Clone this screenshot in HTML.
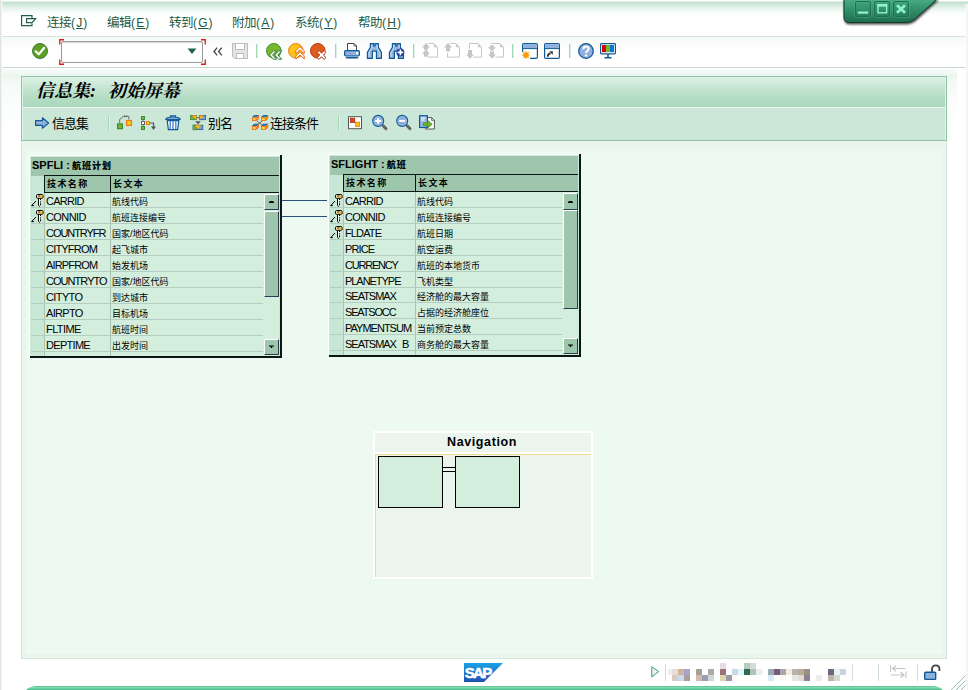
<!DOCTYPE html>
<html lang="zh">
<head>
<meta charset="utf-8">
<title>信息集: 初始屏幕</title>
<style>
*{box-sizing:border-box;margin:0;padding:0}
html,body{width:968px;height:690px;overflow:hidden;background:#fff}
body{font-family:"Liberation Sans","Noto Sans CJK SC",sans-serif;font-size:12px;color:#000;position:relative}
.abs{position:absolute}
svg{position:absolute;overflow:visible}
#topgrad{left:0;top:0;width:968px;height:36px;background:linear-gradient(#fff 0,#fff 1px,#c2e1ce 2px,#c8e4d3 3px,#dff0e6 7px,#f3faf6 11px,#fff 15px)}
#menuline{left:0;top:36px;width:968px;height:1px;background:#d5e4da}
#toolbarbg{left:0;top:37px;width:968px;height:30px;background:linear-gradient(#f7fbf8,#fff 50%)}
#toolline{left:0;top:67px;width:968px;height:1px;background:#c6dace}
#midbg{left:0;top:68px;width:957px;height:591px;background:linear-gradient(#fff 0,#f3faf6 3px,#eaf5ee 8px,#f4faf6 14px,#fcfefd 40px,#fff 80px)}
#leftedge{left:0;top:0;width:3px;height:690px;background:linear-gradient(90deg,#d6dad8,#f3f5f4 1.5px,rgba(255,255,255,0))}
#rightedge{left:965px;top:4px;width:3px;height:686px;background:linear-gradient(270deg,#f0f0f0,#fafafa 2px,rgba(255,255,255,0))}
.menu{top:15px;height:16px;line-height:16px;font-size:12.5px;letter-spacing:-0.5px;color:#1b5a42;white-space:nowrap}
.menu u{text-decoration:underline}
.menu .lat{letter-spacing:1.1px;font-size:12px}
#panel{left:21px;top:76px;width:926px;height:583px;background:#ecf8f0;border:1px solid #d3e6da}
#canvas{left:0;top:64px;width:924px;height:517px;background:#edfaf2;border-style:solid;border-color:#eaf5ee;border-width:8px 4px 4px 4px}
#phead{left:-1px;top:-1px;width:926px;height:65px;border:1px solid #8fc2a6;background:#cbe7d7}
#ptitle{left:0;top:0;width:924px;height:30px;background:linear-gradient(#d9f0e1,#c6e5d2 35%,#b2dcc3 70%,#abd8bd);border:1px solid #e0f3e8;border-bottom:none}
#ptitle span.t{position:absolute;left:13px;top:1px;font-size:18px;font-weight:bold;font-style:italic;line-height:24px;white-space:nowrap;font-family:"Liberation Serif","Noto Serif CJK SC",serif}
#ptitle span.t i{display:inline-block;width:9px;font-style:inherit}
#psep{left:0;top:30px;width:924px;height:1px;background:#eaf7ef}
#ptool{left:0;top:31px;width:924px;height:32px;border-left:1px solid #dff3e7;border-right:1px solid #dff3e7}
.tlabel{top:116px;height:16px;line-height:16px;font-size:13px;letter-spacing:-1px;white-space:nowrap;color:#000}
.vsep{width:2px;height:14px;background:linear-gradient(90deg,#a6d3b8 50%,#e4f4ea 50%)}
.tsep{width:2px;height:14px;background:linear-gradient(90deg,#a3d6b8 50%,#d9f0e3 50%)}
#status{left:0;top:659px;width:968px;height:27px;background:#fff}
.ssep{top:664px;width:1px;height:17px;background:#d3ded7}
#bottomstrip{left:26px;top:686px;width:917px;height:12px;border-radius:12px 12px 0 0 / 5px 5px 0 0;background:linear-gradient(#4cb888,#7ad8ab 1px,#80dcb1 2px,#5cc495 3px,#4fb98a 4px)}
/* tables */
.tb{background:#d3eedd}
.tb .ttl{position:absolute;left:0;top:0;right:0;background:#9dc6ac}
.tb .ttl span{position:absolute;left:1px;top:2px;font-size:11px;line-height:13px;font-weight:bold;white-space:nowrap;letter-spacing:0}
.tb .ttl span b{font-size:9px;letter-spacing:1px;margin-left:-1px}
.cell{position:absolute;font-size:11px;line-height:14px;white-space:nowrap;letter-spacing:-0.8px;color:#000}
.cj{position:absolute;font-size:9px;font-weight:400;line-height:14px;white-space:nowrap;font-family:"Liberation Sans","Noto Sans CJK SC",sans-serif;color:#000}
.hd{position:absolute;font-size:9px;line-height:14px;font-weight:bold;letter-spacing:1.4px;white-space:nowrap;font-family:"Liberation Sans","Noto Sans CJK SC",sans-serif}
.hl{position:absolute;height:1px;background:#b4cdbe}
.vl{position:absolute;width:1px;background:#a9c4b4}
.bk{position:absolute;background:#0c1612}
</style>
</head>
<body>
<div class="abs" id="topgrad"></div>
<div class="abs" id="menuline"></div>
<div class="abs" id="toolbarbg"></div>
<div class="abs" id="toolline"></div>
<div class="abs" id="midbg"></div>
<svg style="left:21px;top:15px" width="16" height="12" viewBox="0 0 16 12"><path d="M11 3V0.6H0.6V10.6H11V8.4M5.6 3.6H14.6L11 7.6H5.6Z" fill="none" stroke="#1d6044" stroke-width="1.2"/></svg>
<div class="abs menu" style="left:47px">连接<span class="lat">(<u>J</u>)</span></div>
<div class="abs menu" style="left:107px">编辑<span class="lat">(<u>E</u>)</span></div>
<div class="abs menu" style="left:169px">转到<span class="lat">(<u>G</u>)</span></div>
<div class="abs menu" style="left:232px">附加<span class="lat">(<u>A</u>)</span></div>
<div class="abs menu" style="left:295px">系统<span class="lat">(<u>Y</u>)</span></div>
<div class="abs menu" style="left:358px">帮助<span class="lat">(<u>H</u>)</span></div>
<svg style="left:32px;top:43px" width="16" height="16" viewBox="0 0 16 16"><circle cx="8" cy="8" r="7.5" fill="#5d9f24" stroke="#3f7d35" stroke-width="1"/><path d="M3.6 8.3 L6.8 11.2 L12.2 4.8" fill="none" stroke="#fff" stroke-width="2.2" stroke-linecap="round" stroke-linejoin="round"/></svg>
<div class="abs" style="left:61px;top:41px;width:142px;height:22px;background:#fff;border:1px solid #9a9a9a;border-radius:2px;box-shadow:inset 0 1px 1px #d8d8d8"></div>
<svg style="left:59px;top:39px" width="147" height="26" viewBox="0 0 147 26"><path d="M5 0.75H0.75V5.5M0.75 20.5V25.25H5M142 0.75H146.25V5.5M146.25 20.5V25.25H142" fill="none" stroke="#e8141c" stroke-width="1.3"/><path d="M128.5 9.5H137.5L133 15Z" fill="#1f6446"/></svg>
<svg style="left:213px;top:47px" width="10" height="9" viewBox="0 0 10 9"><path d="M4.2 0.6L1 4.5L4.2 8.4M8.8 0.6L5.6 4.5L8.8 8.4" fill="none" stroke="#4a4a4a" stroke-width="1.4"/></svg>
<svg style="left:232px;top:43px" width="16" height="16" viewBox="0 0 16 16"><path d="M0.5 0.5H15.5V15.5H2.5L0.5 13.5Z" fill="#e4e4e4" stroke="#bdbdbd"/><rect x="3.5" y="0.5" width="9" height="6" fill="#fff" stroke="#bdbdbd"/><rect x="4.5" y="10.5" width="7" height="5" fill="#fff" stroke="#bdbdbd"/></svg>
<div class="abs tsep" style="left:256px;top:44px"></div>
<div class="abs tsep" style="left:335px;top:44px"></div>
<div class="abs tsep" style="left:413px;top:44px"></div>
<div class="abs tsep" style="left:512px;top:44px"></div>
<div class="abs tsep" style="left:569px;top:44px"></div>
<svg style="left:266px;top:43px" width="16" height="16" viewBox="0 0 16 16"><circle cx="7.8" cy="7.8" r="7.3" fill="#76b82a" stroke="#3f8a3c" stroke-width="1"/><path d="M3.4 12 L7.6 7.8 H10.6 L6.6 12 L10.6 16.2 H7.6Z M8.6 12 L12.8 7.8 H15.8 L11.8 12 L15.8 16.2 H12.8Z" fill="#fff" stroke="#2f7a3a" stroke-width="1" stroke-linejoin="miter"/></svg>
<svg style="left:288px;top:43px" width="16" height="16" viewBox="0 0 16 16"><circle cx="7.8" cy="7.8" r="7.3" fill="#fdc51a" stroke="#ee7d1a" stroke-width="1"/><path d="M12 3.6 L16.2 7.800000000000001 V10.8 L12 6.800000000000001 L7.8 10.8 V7.800000000000001Z M12 8.8 L16.2 13.0 V16.0 L12 12.0 L7.8 16.0 V13.0Z" fill="#fff" stroke="#e8670f" stroke-width="1" stroke-linejoin="miter"/></svg>
<svg style="left:310px;top:43px" width="16" height="16" viewBox="0 0 16 16"><circle cx="7.8" cy="7.8" r="7.3" fill="#de5b1c" stroke="#b93a12" stroke-width="1"/><path d="M7.2 9.4 L9 7.6 L11.6 10.2 L14.2 7.6 L16 9.4 L13.4 12 L16 14.6 L14.2 16.4 L11.6 13.8 L9 16.4 L7.2 14.6 L9.8 12Z" fill="#fff" stroke="#b93a12" stroke-width="1" stroke-linejoin="miter"/></svg>
<svg style="left:344px;top:43px" width="16" height="16" viewBox="0 0 16 16"><path d="M3.5 7V0.5H10L12.5 3V7" fill="#fff" stroke="#444" stroke-width="1"/><path d="M10 0.5V3H12.5" fill="none" stroke="#444" stroke-width="0.8"/><rect x="0.6" y="7.6" width="14.8" height="5.4" rx="1.2" fill="#8fb0dc" stroke="#0f5a96" stroke-width="1.2"/><rect x="12" y="9" width="2.2" height="2.4" fill="#fff"/><path d="M2.5 14.8 H13.5" stroke="#0f5a96" stroke-width="1.6" stroke-linecap="round"/></svg>
<svg style="left:366px;top:43px" width="16" height="16" viewBox="0 0 16 16"><path d="M4.4 0.6H7.7V3H9.1V0.6H12.4V4.4L15.4 9.4V15.4H10.4V8.2H6.4V15.4H1.4V9.4L4.4 4.4Z" fill="#94b4dc" stroke="#0f5a96" stroke-width="1.2" stroke-linejoin="round"/><path d="M5.6 2V5L3 9.6V14M11.2 2V5L13.8 9.6V14" stroke="#c9dcf0" stroke-width="1" fill="none"/></svg>
<svg style="left:388px;top:43px" width="16" height="16" viewBox="0 0 16 16"><path d="M4.4 0.6H7.7V3H9.1V0.6H12.4V4.4L15.4 9.4V15.4H10.4V8.2H6.4V15.4H1.4V9.4L4.4 4.4Z" fill="#94b4dc" stroke="#0f5a96" stroke-width="1.2" stroke-linejoin="round"/><path d="M5.6 2V5L3 9.6V14M11.2 2V5L13.8 9.6V14" stroke="#c9dcf0" stroke-width="1" fill="none"/><circle cx="12.4" cy="9.4" r="4" fill="#1d3e9a"/><path d="M12.4 6.6V12.2M9.6 9.4H15.2" stroke="#fff" stroke-width="1.7"/></svg>
<svg style="left:422px;top:43px" width="16" height="16" viewBox="0 0 16 16"><path d="M6.4 0.5H11.9L15.5 4.2V14.1H6.2" fill="#fff" stroke="#c6c6c6" stroke-width="1"/><path d="M11.9 0.5V4.2H15.5Z" fill="#c6c6c6"/><path d="M4 0L8 4.4H6V6.8H2V4.4H0Z" fill="#c6c6c6"/><path d="M4 6.6L8 11.0H6V13.8H2V11.0H0Z" fill="#c6c6c6"/></svg>
<svg style="left:444px;top:43px" width="16" height="16" viewBox="0 0 16 16"><path d="M6.4 0.5H11.9L15.5 4.2V14.1H3.5V10" fill="#fff" stroke="#c6c6c6" stroke-width="1"/><path d="M11.9 0.5V4.2H15.5Z" fill="#c6c6c6"/><path d="M4 0L8 4.4H6V8.6H2V4.4H0Z" fill="#c6c6c6"/></svg>
<svg style="left:466px;top:43px" width="16" height="16" viewBox="0 0 16 16"><path d="M3.5 5.8V0.5H11.9L15.5 4.2V14.1H7.4" fill="#fff" stroke="#c6c6c6" stroke-width="1"/><path d="M11.9 0.5V4.2H15.5Z" fill="#c6c6c6"/><path d="M4 15.8L8 11.4H6V7.1H2V11.4H0Z" fill="#c6c6c6"/></svg>
<svg style="left:488px;top:43px" width="16" height="16" viewBox="0 0 16 16"><path d="M3.4 0.5H11.9L15.5 4.2V14.1H7.4" fill="#fff" stroke="#c6c6c6" stroke-width="1"/><path d="M11.9 0.5V4.2H15.5Z" fill="#c6c6c6"/><path d="M4 8.6L8 4.199999999999999H6V2.2H2V4.199999999999999H0Z" fill="#c6c6c6"/><path d="M4 15.8L8 11.4H6V8.4H2V11.4H0Z" fill="#c6c6c6"/></svg>
<svg style="left:522px;top:43px" width="16" height="16" viewBox="0 0 16 16"><path d="M0.6 9V1.8Q0.6 0.6 1.8 0.6H14.2Q15.4 0.6 15.4 1.8V14.2Q15.4 15.4 14.2 15.4H8" fill="#fff" stroke="#0f5a96" stroke-width="1.2"/><rect x="1.2" y="1.2" width="13.6" height="4" fill="#8fb0dc"/><path d="M0.6 5.6H15.4" stroke="#0f5a96" stroke-width="1"/><circle cx="4" cy="12" r="2.6" fill="#fb9a0a"/><path d="M4 8V16M0 12H8M1.2 9.2L6.8 14.8M6.8 9.2L1.2 14.8" stroke="#fb9a0a" stroke-width="1.2"/></svg>
<svg style="left:544px;top:43px" width="16" height="16" viewBox="0 0 16 16"><rect x="0.6" y="0.6" width="14.8" height="14.8" rx="1.2" fill="#fff" stroke="#0f5a96" stroke-width="1.2"/><rect x="1.2" y="1.2" width="13.6" height="4" fill="#8fb0dc"/><path d="M0.6 5.6H15.4" stroke="#0f5a96" stroke-width="1"/><path d="M3.8 13.8 Q3.6 10.6 6.6 10.4" fill="none" stroke="#333" stroke-width="1.7"/><path d="M5.2 8.2H8.8V11.8Z" fill="#333"/></svg>
<svg style="left:578px;top:43px" width="16" height="16" viewBox="0 0 16 16"><circle cx="8" cy="8" r="7.3" fill="#8fb0dc" stroke="#0f5a96" stroke-width="1.3"/><path d="M5.4 6.2 Q5.4 3.6 8 3.6 Q10.6 3.6 10.6 5.8 Q10.6 7.2 9.2 8 Q8 8.7 8 10" fill="none" stroke="#fff" stroke-width="2"/><circle cx="8" cy="12.4" r="1.2" fill="#fff"/></svg>
<svg style="left:600px;top:43px" width="16" height="16" viewBox="0 0 16 16"><rect x="0.6" y="0.6" width="14.8" height="10.2" rx="0.8" fill="#fff" stroke="#0f5a96" stroke-width="1.2"/><rect x="2" y="2" width="4" height="7.2" fill="#d9000d"/><rect x="6" y="2" width="4" height="7.2" fill="#76b82a"/><rect x="10" y="2" width="4" height="7.2" fill="#0a78d2"/><path d="M8 11V14M4.5 14.8H11.5" stroke="#0f5a96" stroke-width="1.6"/></svg>
<div class="abs" id="panel">
  <div class="abs" id="canvas"></div>
  <div class="abs" id="phead">
    <div class="abs" id="ptitle"><span class="t">信息集<i>:</i><i> </i>初始屏幕</span></div>
    <div class="abs" id="psep"></div>
    <div class="abs" id="ptool"></div>
  </div>
</div>
<svg style="left:35px;top:117px" width="14" height="12" viewBox="0 0 14 12"><path d="M0.6 3.6H7.4V0.8L13.6 6L7.4 11.2V8.4H0.6Z" fill="#8fb0dc" stroke="#0f5a96" stroke-width="1.2" stroke-linejoin="round"/></svg>
<div class="abs tlabel" style="left:52px">信息集</div>
<div class="abs vsep" style="left:108px;top:116px"></div>
<svg style="left:117px;top:115px" width="16" height="15" viewBox="0 0 16 15"><path d="M2.7 8V4.4L6.4 1.4H11.8V4.6" fill="none" stroke="#6a6a6a" stroke-width="1"/><path d="M7.4 0V2.4M9.6 0V1.4" stroke="#6a6a6a" stroke-width="0.8"/><rect x="0.6" y="8.9" width="4.8" height="4.8" fill="#7ab62c" stroke="#3f8a3c" stroke-width="1.2"/><rect x="9.6" y="5.6" width="4.8" height="4.8" fill="#fdd01a" stroke="#ee7d1a" stroke-width="1.3"/></svg>
<svg style="left:141px;top:116px" width="16" height="15" viewBox="0 0 16 15"><path d="M2 3V12" stroke="#666" stroke-width="0.8"/><rect x="0.5" y="0.5" width="3" height="3" fill="#7ab62c" stroke="#3f8a3c"/><rect x="0.5" y="5.5" width="3" height="3" fill="#fff" stroke="#666"/><rect x="0.5" y="10.5" width="3" height="3" fill="#7ab62c" stroke="#3f8a3c"/><rect x="5.5" y="5.5" width="3" height="3" fill="#fdd01a" stroke="#ee7d1a"/><path d="M9 7H12.5V11" fill="none" stroke="#555" stroke-width="1.2"/><path d="M10 10.6H15L12.5 14Z" fill="#555"/></svg>
<svg style="left:165px;top:115px" width="16" height="15" viewBox="0 0 16 15"><path d="M5.5 2V0.8H10.5V2" fill="none" stroke="#0f5a96" stroke-width="1.2"/><path d="M0.8 4.4 Q0.8 2 8 2 Q15.2 2 15.2 4.4 Z" fill="#a9c4e6" stroke="#0f5a96" stroke-width="1.2"/><path d="M2.2 5.6H13.8L12.6 14.6H3.4Z" fill="#fff" stroke="#0f5a96" stroke-width="1.2" stroke-linejoin="round"/><path d="M5.2 6V14M8 6V14M10.8 6V14" stroke="#4f8bd0" stroke-width="1.4"/></svg>
<svg style="left:190px;top:115px" width="16" height="15" viewBox="0 0 16 15"><rect x="0.5" y="0.5" width="6" height="4.2" fill="#6fae3a" stroke="#3f8a3c" stroke-width="0.8"/><path d="M2 0.7H6.4V4.5Z" fill="#fdc51a" stroke="#ee7d1a" stroke-width="0.6"/><rect x="9.5" y="0.5" width="6" height="4.2" fill="#7aa6dc" stroke="#0f5a96" stroke-width="0.8"/><path d="M9.6 0.7H14L9.6 4.5Z" fill="#fdc51a" stroke="#ee7d1a" stroke-width="0.6"/><path d="M6.5 2.6H9.5" stroke="#555" stroke-width="0.9"/><path d="M5.2 6.2H10.8L8 9.2Z" fill="#555"/><rect x="3.2" y="10.2" width="9.6" height="4.4" fill="#7aa6dc" stroke="#0f5a96" stroke-width="0.8"/><path d="M3 10H6.4V14.8H3Z" fill="#6fae3a" stroke="#3f8a3c" stroke-width="0.6"/><path d="M5 10.3H11L8 14.3Z" fill="#fdc51a" stroke="#ee7d1a" stroke-width="0.6"/></svg>
<div class="abs tlabel" style="left:208px">别名</div>
<svg style="left:251px;top:115px" width="17" height="15" viewBox="0 0 17 15"><path d="M5.6 5.8L11.8 10.4M11.4 6L5.8 10.2" stroke="#555" stroke-width="0.8"/><g transform="translate(0.9,0)"><path d="M0 2.3L2.4 0H7.2L4.8 2.3Z" fill="#0f5a96"/><path d="M2.2 1.2H5" stroke="#8fb0dc" stroke-width="0.6"/><path d="M4.8 2.3L7.2 0V3.7L4.8 6Z" fill="#f26a1b"/><path d="M5.5 3.3L6.5 2.3V3.3L5.5 4.3Z" fill="#ffd21a"/><rect x="0" y="2.3" width="4.8" height="3.7" fill="#f26a1b"/><rect x="1" y="3.2" width="2.8" height="1.9" fill="#ffe03a"/></g><g transform="translate(10,0)"><path d="M0 2.3L2.4 0H7.2L4.8 2.3Z" fill="#0f5a96"/><path d="M2.2 1.2H5" stroke="#8fb0dc" stroke-width="0.6"/><path d="M4.8 2.3L7.2 0V3.7L4.8 6Z" fill="#f26a1b"/><path d="M5.5 3.3L6.5 2.3V3.3L5.5 4.3Z" fill="#ffd21a"/><rect x="0" y="2.3" width="4.8" height="3.7" fill="#f26a1b"/><rect x="1" y="3.2" width="2.8" height="1.9" fill="#ffe03a"/></g><g transform="translate(0.9,8.8)"><path d="M0 2.3L2.4 0H7.2L4.8 2.3Z" fill="#0f5a96"/><path d="M2.2 1.2H5" stroke="#8fb0dc" stroke-width="0.6"/><path d="M4.8 2.3L7.2 0V3.7L4.8 6Z" fill="#f26a1b"/><path d="M5.5 3.3L6.5 2.3V3.3L5.5 4.3Z" fill="#ffd21a"/><rect x="0" y="2.3" width="4.8" height="3.7" fill="#f26a1b"/><rect x="1" y="3.2" width="2.8" height="1.9" fill="#ffe03a"/></g><g transform="translate(10,8.8)"><path d="M0 2.3L2.4 0H7.2L4.8 2.3Z" fill="#0f5a96"/><path d="M2.2 1.2H5" stroke="#8fb0dc" stroke-width="0.6"/><path d="M4.8 2.3L7.2 0V3.7L4.8 6Z" fill="#f26a1b"/><path d="M5.5 3.3L6.5 2.3V3.3L5.5 4.3Z" fill="#ffd21a"/><rect x="0" y="2.3" width="4.8" height="3.7" fill="#f26a1b"/><rect x="1" y="3.2" width="2.8" height="1.9" fill="#ffe03a"/></g></svg>
<div class="abs tlabel" style="left:270px">连接条件</div>
<div class="abs vsep" style="left:338px;top:116px"></div>
<svg style="left:348px;top:116px" width="14" height="13" viewBox="0 0 14 13"><rect x="0.5" y="0.7" width="13" height="12" fill="#fff" stroke="#555" stroke-width="1"/><rect x="2.5" y="2.2" width="4.2" height="4.2" fill="#e2481f" stroke="#a32a10" stroke-width="0.8"/><rect x="7.4" y="6.2" width="4.2" height="4.2" fill="#fdc51a" stroke="#ee7d1a" stroke-width="0.9"/></svg>
<svg style="left:372px;top:115px" width="16" height="16" viewBox="0 0 16 16"><path d="M11.2 10.9L14 13.6" stroke="#666" stroke-width="3" stroke-linecap="round"/><circle cx="6.2" cy="5.9" r="5.5" fill="#9dbbe0" stroke="#0f5a96" stroke-width="1.1"/><circle cx="6.2" cy="5.9" r="4.2" fill="#8aaedc"/><path d="M6.2 2.9V8.9M3.2 5.9H9.2" stroke="#fff" stroke-width="2"/></svg>
<svg style="left:396px;top:115px" width="16" height="16" viewBox="0 0 16 16"><path d="M11.2 10.9L14 13.6" stroke="#666" stroke-width="3" stroke-linecap="round"/><circle cx="6.2" cy="5.9" r="5.5" fill="#9dbbe0" stroke="#0f5a96" stroke-width="1.1"/><circle cx="6.2" cy="5.9" r="4.2" fill="#8aaedc"/><path d="M3.2 5.9H9.2" stroke="#fff" stroke-width="2"/></svg>
<svg style="left:419px;top:115px" width="16" height="16" viewBox="0 0 16 16"><path d="M8 2.6H12.6L15.4 5.4V14H6.6V12" fill="#fff" stroke="#555" stroke-width="1"/><path d="M12.6 2.6V5.4H15.4" fill="none" stroke="#555" stroke-width="0.8"/><rect x="0.6" y="0.7" width="7.8" height="11.8" fill="#9dbbe0" stroke="#0f5a96" stroke-width="1.2"/><path d="M2 3H6.4M2 5H5.4" stroke="#fff" stroke-width="1"/><path d="M4.2 7.8H8.8V5.6L13.2 9.2L8.8 12.8V10.6H4.2Z" fill="#6fb52c" stroke="#3f8a2a" stroke-width="0.8" stroke-linejoin="round"/></svg>
<div class="abs" style="left:29px;top:155px;width:253px;height:203px">
<div class="abs" style="left:0;top:0;width:251px;height:201px;background:#fff"></div>
<div class="abs" style="left:1px;top:1px;width:250px;height:200px;background:#cbe9d8"></div>
<div class="bk" style="left:251px;top:0;width:2px;height:203px"></div>
<div class="bk" style="left:1px;top:201px;width:252px;height:2px"></div>
<div class="abs tb" style="left:2px;top:2px;width:248px;height:199px;overflow:hidden">
<div class="ttl" style="height:36px"><span>SPFLI : <b>航班计划</b></span></div>
<div class="abs" style="left:0;top:19px;width:13px;height:203px;background:#c9e7d5"></div>
<div class="bk" style="left:13px;top:18px;width:248px;height:1px"></div>
<div class="bk" style="left:13px;top:35px;width:248px;height:1px"></div>
<div class="bk" style="left:13px;top:18px;width:1px;height:17px"></div>
<div class="bk" style="left:79px;top:18px;width:1px;height:17px"></div>
<div class="hd" style="left:16px;top:20px">技术名称</div>
<div class="hd" style="left:82px;top:20px">长文本</div>
<div class="vl" style="left:13px;top:36px;height:203px"></div>
<div class="vl" style="left:79px;top:36px;height:203px"></div>
<div class="hl" style="left:0;top:50px;width:232px"></div>
<div class="hl" style="left:0;top:66px;width:232px"></div>
<div class="hl" style="left:0;top:82px;width:232px"></div>
<div class="hl" style="left:0;top:98px;width:232px"></div>
<div class="hl" style="left:0;top:114px;width:232px"></div>
<div class="hl" style="left:0;top:130px;width:232px"></div>
<div class="hl" style="left:0;top:146px;width:232px"></div>
<div class="hl" style="left:0;top:162px;width:232px"></div>
<div class="hl" style="left:0;top:178px;width:232px"></div>
<div class="hl" style="left:0;top:194px;width:232px"></div>
<svg style="left:0px;top:35px" width="13" height="15" viewBox="0 0 13 15"><rect x="5.5" y="2.5" width="6.6" height="3.8" rx="1.2" fill="#ffeeb8" stroke="#000" stroke-width="1"/><rect x="8.8" y="3.4" width="2.6" height="2.4" fill="#f7a21b"/><path d="M7 4H9" stroke="#000" stroke-width="0.9"/><path d="M7.5 6.5V13.4L8.8 14.6" stroke="#000" stroke-width="1" fill="none"/><path d="M8.5 7V13" stroke="#fff" stroke-width="1"/><path d="M9.5 6.8V8 M9.5 9.4V10.4 M9.5 11.4V13.2" stroke="#000" stroke-width="1"/><path d="M4.9 9.1L0.6 13.6H2.9" stroke="#000" stroke-width="1" fill="none"/></svg>
<div class="cell" style="left:15px;top:37px"><span style="letter-spacing:-0.76px">CARRID</span></div>
<div class="cj" style="left:81px;top:38px">航线代码</div>
<svg style="left:0px;top:51px" width="13" height="15" viewBox="0 0 13 15"><rect x="5.5" y="2.5" width="6.6" height="3.8" rx="1.2" fill="#ffeeb8" stroke="#000" stroke-width="1"/><rect x="8.8" y="3.4" width="2.6" height="2.4" fill="#f7a21b"/><path d="M7 4H9" stroke="#000" stroke-width="0.9"/><path d="M7.5 6.5V13.4L8.8 14.6" stroke="#000" stroke-width="1" fill="none"/><path d="M8.5 7V13" stroke="#fff" stroke-width="1"/><path d="M9.5 6.8V8 M9.5 9.4V10.4 M9.5 11.4V13.2" stroke="#000" stroke-width="1"/><path d="M4.9 9.1L0.6 13.6H2.9" stroke="#000" stroke-width="1" fill="none"/></svg>
<div class="cell" style="left:15px;top:53px"><span style="letter-spacing:-0.6px">CONNID</span></div>
<div class="cj" style="left:81px;top:54px">航班连接编号</div>
<div class="cell" style="left:15px;top:69px"><span style="letter-spacing:-1.05px">COUNTRYFR</span></div>
<div class="cj" style="left:81px;top:70px">国家/地区代码</div>
<div class="cell" style="left:15px;top:85px"><span style="letter-spacing:-0.8px">CITYFROM</span></div>
<div class="cj" style="left:81px;top:86px">起飞城市</div>
<div class="cell" style="left:15px;top:101px"><span style="letter-spacing:-0.84px">AIRPFROM</span></div>
<div class="cj" style="left:81px;top:102px">始发机场</div>
<div class="cell" style="left:15px;top:117px"><span style="letter-spacing:-0.95px">COUNTRYTO</span></div>
<div class="cj" style="left:81px;top:118px">国家/地区代码</div>
<div class="cell" style="left:15px;top:133px"><span style="letter-spacing:-0.61px">CITYTO</span></div>
<div class="cj" style="left:81px;top:134px">到达城市</div>
<div class="cell" style="left:15px;top:149px"><span style="letter-spacing:-0.67px">AIRPTO</span></div>
<div class="cj" style="left:81px;top:150px">目标机场</div>
<div class="cell" style="left:15px;top:165px"><span style="letter-spacing:-0.59px">FLTIME</span></div>
<div class="cj" style="left:81px;top:166px">航班时间</div>
<div class="cell" style="left:15px;top:181px"><span style="letter-spacing:-0.7px">DEPTIME</span></div>
<div class="cj" style="left:81px;top:182px">出发时间</div>
<div class="abs" style="left:233px;top:37px;width:15px;height:16px;background:#9dc6ac;border-left:1px solid #fff;border-top:1px solid #fff;border-right:1px solid #2a3c50;border-bottom:1px solid #2a3c50"></div>
<svg style="left:237px;top:43px" width="7" height="4" viewBox="0 0 7 4"><path d="M1 3H6V2L4.8 1H2.2L1 2Z" fill="#000"/></svg>
<div class="abs" style="left:233px;top:54px;width:15px;height:86px;background:#9dc6ac;border-left:1px solid #fff;border-top:1px solid #fff;border-right:1px solid #2a3c50;border-bottom:1px solid #2a3c50"></div>
<div class="abs" style="left:233px;top:182px;width:15px;height:16px;background:#9dc6ac;border-left:1px solid #fff;border-top:1px solid #fff;border-right:1px solid #2a3c50;border-bottom:1px solid #2a3c50"></div>
<svg style="left:237px;top:188px" width="7" height="4" viewBox="0 0 7 4"><path d="M1 0.5H6V1.6H4.2V3H2.8V1.6H1Z" fill="#000"/></svg>
</div></div>
<div class="abs" style="left:328px;top:154px;width:253px;height:203px">
<div class="abs" style="left:0;top:0;width:251px;height:201px;background:#fff"></div>
<div class="abs" style="left:1px;top:1px;width:250px;height:200px;background:#cbe9d8"></div>
<div class="bk" style="left:251px;top:0;width:2px;height:203px"></div>
<div class="bk" style="left:1px;top:201px;width:252px;height:2px"></div>
<div class="abs tb" style="left:2px;top:2px;width:248px;height:199px;overflow:hidden">
<div class="ttl" style="height:36px"><span>SFLIGHT : <b>航班</b></span></div>
<div class="abs" style="left:0;top:19px;width:13px;height:203px;background:#c9e7d5"></div>
<div class="bk" style="left:13px;top:18px;width:248px;height:1px"></div>
<div class="bk" style="left:13px;top:35px;width:248px;height:1px"></div>
<div class="bk" style="left:13px;top:18px;width:1px;height:17px"></div>
<div class="bk" style="left:85px;top:18px;width:1px;height:17px"></div>
<div class="hd" style="left:16px;top:20px">技术名称</div>
<div class="hd" style="left:88px;top:20px">长文本</div>
<div class="vl" style="left:13px;top:36px;height:203px"></div>
<div class="vl" style="left:85px;top:36px;height:203px"></div>
<div class="hl" style="left:0;top:51px;width:232px"></div>
<div class="hl" style="left:0;top:67px;width:232px"></div>
<div class="hl" style="left:0;top:83px;width:232px"></div>
<div class="hl" style="left:0;top:99px;width:232px"></div>
<div class="hl" style="left:0;top:115px;width:232px"></div>
<div class="hl" style="left:0;top:131px;width:232px"></div>
<div class="hl" style="left:0;top:146px;width:232px"></div>
<div class="hl" style="left:0;top:162px;width:232px"></div>
<div class="hl" style="left:0;top:178px;width:232px"></div>
<div class="hl" style="left:0;top:194px;width:232px"></div>
<svg style="left:0px;top:36px" width="13" height="15" viewBox="0 0 13 15"><rect x="5.5" y="2.5" width="6.6" height="3.8" rx="1.2" fill="#ffeeb8" stroke="#000" stroke-width="1"/><rect x="8.8" y="3.4" width="2.6" height="2.4" fill="#f7a21b"/><path d="M7 4H9" stroke="#000" stroke-width="0.9"/><path d="M7.5 6.5V13.4L8.8 14.6" stroke="#000" stroke-width="1" fill="none"/><path d="M8.5 7V13" stroke="#fff" stroke-width="1"/><path d="M9.5 6.8V8 M9.5 9.4V10.4 M9.5 11.4V13.2" stroke="#000" stroke-width="1"/><path d="M4.9 9.1L0.6 13.6H2.9" stroke="#000" stroke-width="1" fill="none"/></svg>
<div class="cell" style="left:15px;top:38px"><span style="letter-spacing:-0.76px">CARRID</span></div>
<div class="cj" style="left:87px;top:39px">航线代码</div>
<svg style="left:0px;top:52px" width="13" height="15" viewBox="0 0 13 15"><rect x="5.5" y="2.5" width="6.6" height="3.8" rx="1.2" fill="#ffeeb8" stroke="#000" stroke-width="1"/><rect x="8.8" y="3.4" width="2.6" height="2.4" fill="#f7a21b"/><path d="M7 4H9" stroke="#000" stroke-width="0.9"/><path d="M7.5 6.5V13.4L8.8 14.6" stroke="#000" stroke-width="1" fill="none"/><path d="M8.5 7V13" stroke="#fff" stroke-width="1"/><path d="M9.5 6.8V8 M9.5 9.4V10.4 M9.5 11.4V13.2" stroke="#000" stroke-width="1"/><path d="M4.9 9.1L0.6 13.6H2.9" stroke="#000" stroke-width="1" fill="none"/></svg>
<div class="cell" style="left:15px;top:54px"><span style="letter-spacing:-0.6px">CONNID</span></div>
<div class="cj" style="left:87px;top:55px">航班连接编号</div>
<svg style="left:0px;top:68px" width="13" height="15" viewBox="0 0 13 15"><rect x="5.5" y="2.5" width="6.6" height="3.8" rx="1.2" fill="#ffeeb8" stroke="#000" stroke-width="1"/><rect x="8.8" y="3.4" width="2.6" height="2.4" fill="#f7a21b"/><path d="M7 4H9" stroke="#000" stroke-width="0.9"/><path d="M7.5 6.5V13.4L8.8 14.6" stroke="#000" stroke-width="1" fill="none"/><path d="M8.5 7V13" stroke="#fff" stroke-width="1"/><path d="M9.5 6.8V8 M9.5 9.4V10.4 M9.5 11.4V13.2" stroke="#000" stroke-width="1"/><path d="M4.9 9.1L0.6 13.6H2.9" stroke="#000" stroke-width="1" fill="none"/></svg>
<div class="cell" style="left:15px;top:70px"><span style="letter-spacing:-0.86px">FLDATE</span></div>
<div class="cj" style="left:87px;top:71px">航班日期</div>
<div class="cell" style="left:15px;top:86px"><span style="letter-spacing:-0.88px">PRICE</span></div>
<div class="cj" style="left:87px;top:87px">航空运费</div>
<div class="cell" style="left:15px;top:102px"><span style="letter-spacing:-1.2px">CURRENCY</span></div>
<div class="cj" style="left:87px;top:103px">航班的本地货币</div>
<div class="cell" style="left:15px;top:118px"><span style="letter-spacing:-1.04px">PLANETYPE</span></div>
<div class="cj" style="left:87px;top:119px">飞机类型</div>
<div class="cell" style="left:15px;top:133px"><span style="letter-spacing:-1.02px">SEATSMAX</span></div>
<div class="cj" style="left:87px;top:134px">经济舱的最大容量</div>
<div class="cell" style="left:15px;top:149px"><span style="letter-spacing:-1.16px">SEATSOCC</span></div>
<div class="cj" style="left:87px;top:150px">占据的经济舱座位</div>
<div class="cell" style="left:15px;top:165px"><span style="letter-spacing:-0.99px">PAYMENTSUM</span></div>
<div class="cj" style="left:87px;top:166px">当前预定总数</div>
<div class="cell" style="left:15px;top:181px"><span style="letter-spacing:-1.02px">SEATSMAX</span><span style="letter-spacing:0;display:inline-block;width:6px"> </span><span style="letter-spacing:-0.97px">B</span></div>
<div class="cj" style="left:87px;top:182px">商务舱的最大容量</div>
<div class="abs" style="left:233px;top:37px;width:15px;height:17px;background:#9dc6ac;border-left:1px solid #fff;border-top:1px solid #fff;border-right:1px solid #2a3c50;border-bottom:1px solid #2a3c50"></div>
<svg style="left:237px;top:44px" width="7" height="4" viewBox="0 0 7 4"><path d="M1 3H6V2L4.8 1H2.2L1 2Z" fill="#000"/></svg>
<div class="abs" style="left:233px;top:54px;width:15px;height:99px;background:#9dc6ac;border-left:1px solid #fff;border-top:1px solid #fff;border-right:1px solid #2a3c50;border-bottom:1px solid #2a3c50"></div>
<div class="abs" style="left:233px;top:182px;width:15px;height:16px;background:#9dc6ac;border-left:1px solid #fff;border-top:1px solid #fff;border-right:1px solid #2a3c50;border-bottom:1px solid #2a3c50"></div>
<svg style="left:237px;top:188px" width="7" height="4" viewBox="0 0 7 4"><path d="M1 0.5H6V1.6H4.2V3H2.8V1.6H1Z" fill="#000"/></svg>
</div></div>
<div class="abs" style="left:282px;top:200px;width:45px;height:1px;background:#2b4f7e"></div>
<div class="abs" style="left:282px;top:216px;width:45px;height:1px;background:#2b4f7e"></div>
<div class="abs" style="left:373px;top:431px;width:220px;height:148px;background:#fff">
<div class="abs" style="left:2px;top:2px;width:216px;height:19px;background:#ebf5ee;text-align:center;font-weight:bold;font-size:12.5px;line-height:19px;letter-spacing:0.6px;text-indent:-2px;color:#000">Navigation</div>
<div class="abs" style="left:2px;top:23px;width:216px;height:123px;background:#ebf5ee;border-top:1px solid #f4d88f;border-left:1px solid #f4d88f"></div>
<div class="abs" style="left:5px;top:25px;width:65px;height:52px;background:#d3eedd;border:1px solid #000"></div>
<div class="abs" style="left:82px;top:25px;width:65px;height:52px;background:#d3eedd;border:1px solid #000"></div>
<div class="abs" style="left:70px;top:36px;width:12px;height:1px;background:#000"></div>
<div class="abs" style="left:70px;top:40px;width:12px;height:1px;background:#000"></div>
</div>
<div class="abs" id="status"></div>
<svg style="left:464px;top:663px" width="40" height="20" viewBox="0 0 40 20"><defs><linearGradient id="sg" x1="0" y1="0" x2="0" y2="1"><stop offset="0" stop-color="#1aa3e6"/><stop offset="0.55" stop-color="#1d74cc"/><stop offset="1" stop-color="#1f4fae"/></linearGradient></defs><path d="M0 0H39L20 19H0Z" fill="url(#sg)"/><text x="0.8" y="15.2" font-family="Liberation Sans, sans-serif" font-weight="bold" font-size="15" fill="#fff" stroke="#fff" stroke-width="0.6" letter-spacing="-1.7">SAP</text></svg>
<svg style="left:651px;top:666px" width="9" height="12" viewBox="0 0 9 12"><path d="M0.8 0.8L7.6 5.6L0.8 11Z" fill="#f2f2f2" stroke="#3c9b6a" stroke-width="1" stroke-linejoin="round"/></svg>
<div class="abs ssep" style="left:665px"></div>
<div class="abs ssep" style="left:852px"></div>
<div class="abs ssep" style="left:878px"></div>
<div class="abs ssep" style="left:917px"></div>
<svg style="left:0;top:0" width="968" height="690" viewBox="0 0 968 690" shape-rendering="crispEdges"><rect x="668" y="669" width="6" height="6" fill="#eef0ee"/><rect x="672" y="669" width="6" height="6" fill="#e8ddd4"/><rect x="678" y="669" width="6" height="6" fill="#cdb59b"/><rect x="684" y="669" width="6" height="6" fill="#a7a5cc"/><rect x="696" y="669" width="6" height="6" fill="#a89c9c"/><rect x="708" y="669" width="6" height="6" fill="#adaba4"/><rect x="720" y="669" width="6" height="6" fill="#98737c"/><rect x="732" y="669" width="6" height="6" fill="#c9d9e8"/><rect x="738" y="669" width="6" height="6" fill="#dff6fa"/><rect x="744" y="669" width="6" height="6" fill="#2f6b50"/><rect x="750" y="669" width="6" height="6" fill="#adc5b8"/><rect x="756" y="669" width="6" height="6" fill="#eceeed"/><rect x="768" y="669" width="6" height="6" fill="#9aaab0"/><rect x="774" y="669" width="6" height="6" fill="#7a5a7c"/><rect x="780" y="669" width="6" height="6" fill="#aaa6ae"/><rect x="786" y="669" width="6" height="6" fill="#f5ecdf"/><rect x="792" y="669" width="6" height="6" fill="#b9b2ae"/><rect x="798" y="669" width="6" height="6" fill="#b8ae98"/><rect x="804" y="669" width="6" height="6" fill="#9c9084"/><rect x="828" y="669" width="6" height="6" fill="#6c687c"/><rect x="834" y="669" width="6" height="6" fill="#e2f8ee"/><rect x="840" y="669" width="6" height="6" fill="#cad4e0"/><rect x="672" y="675" width="6" height="6" fill="#d8ccc2"/><rect x="678" y="675" width="6" height="6" fill="#cdd9ec"/><rect x="684" y="675" width="6" height="6" fill="#a8a0a0"/><rect x="696" y="675" width="6" height="6" fill="#d3b8ac"/><rect x="702" y="675" width="6" height="6" fill="#9c9cb4"/><rect x="708" y="675" width="6" height="6" fill="#d0d8d4"/><rect x="720" y="675" width="6" height="6" fill="#ddd4b0"/><rect x="726" y="675" width="6" height="6" fill="#9a98a8"/><rect x="732" y="675" width="6" height="6" fill="#fdfdf5"/><rect x="768" y="675" width="6" height="6" fill="#d8eaf4"/><rect x="780" y="675" width="6" height="6" fill="#fafaf0"/><rect x="792" y="675" width="6" height="6" fill="#e6e6e6"/><rect x="798" y="675" width="6" height="6" fill="#e4dcd0"/><rect x="804" y="675" width="6" height="6" fill="#8c8098"/><rect x="816" y="675" width="6" height="6" fill="#ececec"/><rect x="828" y="675" width="6" height="6" fill="#c0b4a8"/><rect x="834" y="675" width="6" height="6" fill="#d4dcd0"/><rect x="720" y="663" width="6" height="6" fill="#e6dde3"/><rect x="744" y="663" width="6" height="6" fill="#b5cdc0"/><rect x="750" y="663" width="6" height="6" fill="#d0dcd5"/></svg>
<svg style="left:890px;top:665px" width="17" height="14" viewBox="0 0 17 14"><path d="M0.5 0V7M16 6.5V13.5" stroke="#c4c4c4" stroke-width="1"/><path d="M2.5 3.5H15.5M6 0.8L2.5 3.5L6 6.2" fill="none" stroke="#c4c4c4" stroke-width="1.2"/><path d="M1 10H14M10.5 7.3L14 10L10.5 12.7" fill="none" stroke="#c4c4c4" stroke-width="1.2"/></svg>
<svg style="left:924px;top:664px" width="17" height="17" viewBox="0 0 17 17"><path d="M8 8V5Q8 1.4 11.8 1.4Q15.4 1.4 15.4 5V7" fill="none" stroke="#444" stroke-width="1.8"/><rect x="0.7" y="8.2" width="11" height="7.2" rx="0.8" fill="#8fb0dc" stroke="#0f5a96" stroke-width="1.4"/></svg>
<svg style="left:948px;top:670px" width="20" height="20" viewBox="0 0 20 20"><path d="M3 20L20 3M8 20L20 8M13 20L20 13" stroke="#8fc8aa" stroke-width="1"/></svg>
<div class="abs" id="bottomstrip"></div>
<svg style="left:838px;top:0" width="106" height="30" viewBox="0 0 106 30"><defs><linearGradient id="wg" x1="0" y1="0" x2="0" y2="1"><stop offset="0" stop-color="#48ad84"/><stop offset="0.45" stop-color="#319069"/><stop offset="1" stop-color="#1f6c4e"/></linearGradient><filter id="ws" x="-10%" y="-10%" width="120%" height="160%"><feGaussianBlur stdDeviation="1.3"/></filter></defs><path d="M6 0V18.5Q6 24.5 12 24.5H68Q74 24.5 78.5 20.5L101 0Z" fill="#000" opacity="0.7" filter="url(#ws)"/><path d="M6 -1V17Q6 22.5 11.5 22.5H68Q73 22.5 77 19L99 -1Z" fill="url(#wg)" stroke="#0e3f2c" stroke-width="1"/><g fill="none" stroke="#1c6b4d" stroke-width="1.1"><rect x="17.5" y="1.5" width="15" height="15" rx="1.8"/><rect x="36.5" y="1.5" width="15" height="15" rx="1.8"/><rect x="55.5" y="1.5" width="15" height="15" rx="1.8"/></g><g fill="none" stroke="#58b893" stroke-width="0.6" opacity="0.7"><rect x="16.6" y="0.6" width="16.8" height="16.8" rx="2.4"/><rect x="35.6" y="0.6" width="16.8" height="16.8" rx="2.4"/><rect x="54.6" y="0.6" width="16.8" height="16.8" rx="2.4"/></g><path d="M19.8 12.6H30.2" stroke="#8ff5d0" stroke-width="2.2"/><rect x="40" y="5.4" width="8.6" height="7.4" fill="none" stroke="#8ff5d0" stroke-width="1.4"/><path d="M39.3 5.3H49.3" stroke="#8ff5d0" stroke-width="2.6"/><path d="M59 5.2L67 12.8M67 5.2L59 12.8" stroke="#8ff5d0" stroke-width="2.6"/></svg>
<div class="abs" id="leftedge"></div>
<div class="abs" id="rightedge"></div>
</body>
</html>
